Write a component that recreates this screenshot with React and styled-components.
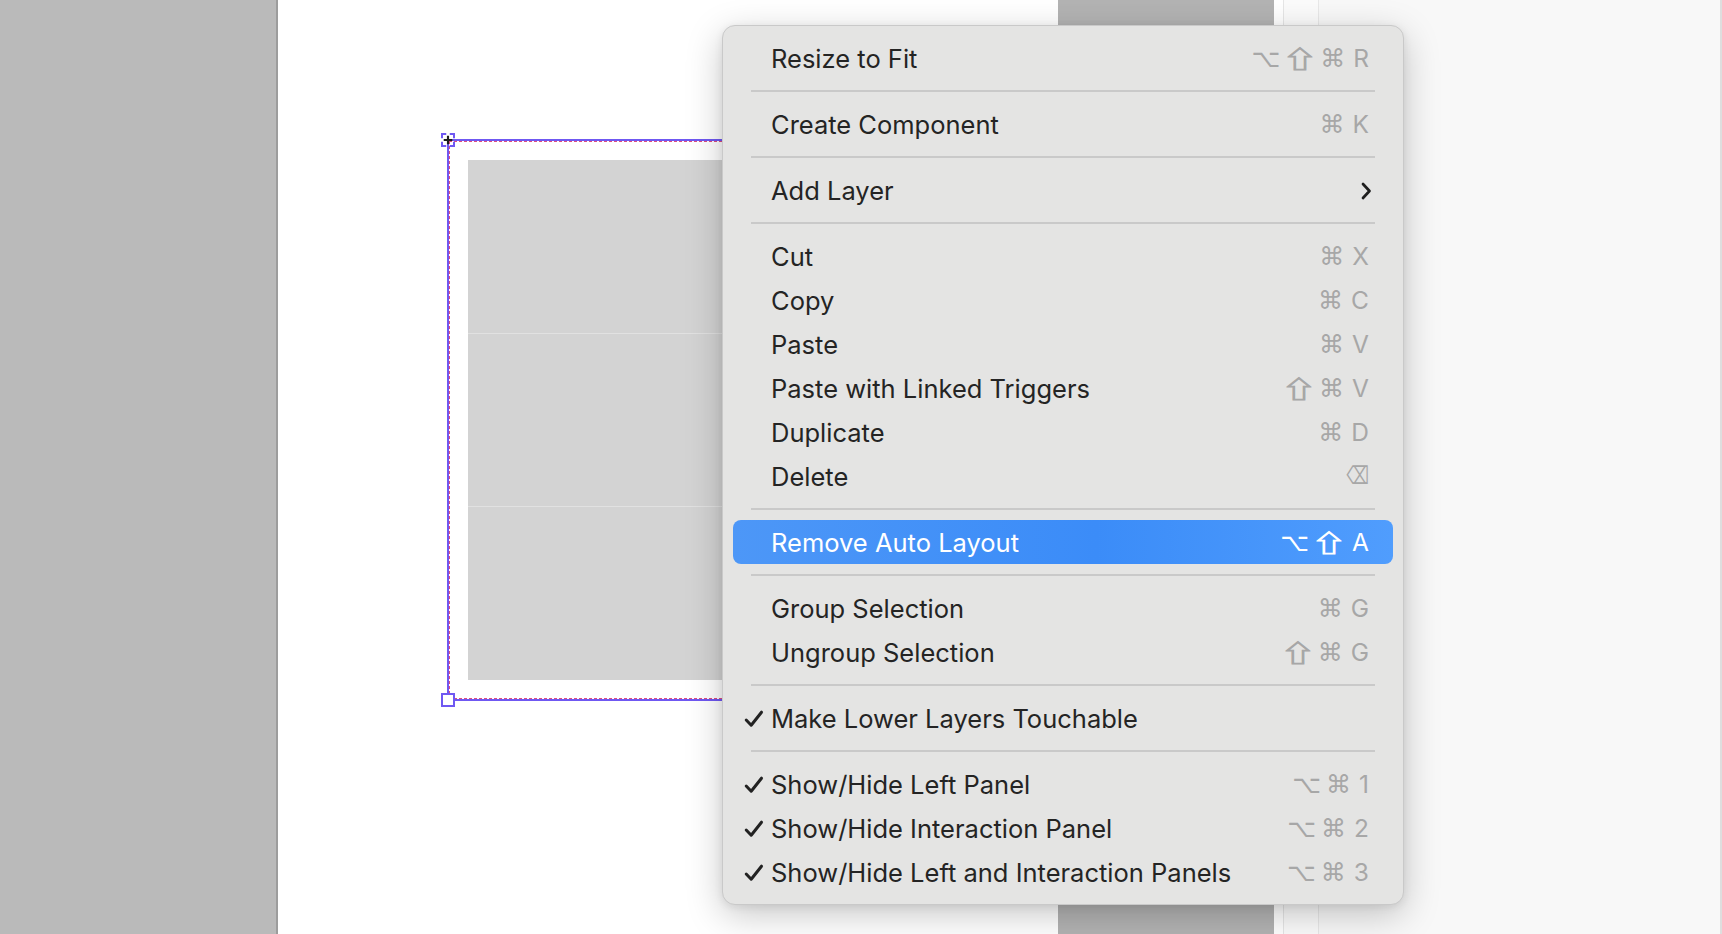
import React from "react";
import styled, { createGlobalStyle } from "styled-components";

const GlobalStyle = createGlobalStyle`
  html, body {
    margin: 0;
    padding: 0;
    overflow: hidden;
    background: #ffffff;
  }
  body {
    font-family: Inter, "Noto Sans", "DejaVu Sans", sans-serif;
  }
`;

const MENU = [
  [{ label: "Resize to Fit", keys: ["⌥", "⇧", "⌘", "R"] }],
  [{ label: "Create Component", keys: ["⌘", "K"] }],
  [{ label: "Add Layer", submenu: true }],
  [
    { label: "Cut", keys: ["⌘", "X"] },
    { label: "Copy", keys: ["⌘", "C"] },
    { label: "Paste", keys: ["⌘", "V"] },
    { label: "Paste with Linked Triggers", keys: ["⇧", "⌘", "V"] },
    { label: "Duplicate", keys: ["⌘", "D"] },
    { label: "Delete", keys: ["⌫"] },
  ],
  [{ label: "Remove Auto Layout", keys: ["⌥", "⇧", "A"], active: true }],
  [
    { label: "Group Selection", keys: ["⌘", "G"] },
    { label: "Ungroup Selection", keys: ["⇧", "⌘", "G"] },
  ],
  [{ label: "Make Lower Layers Touchable", checked: true }],
  [
    { label: "Show/Hide Left Panel", keys: ["⌥", "⌘", "1"], checked: true },
    { label: "Show/Hide Interaction Panel", keys: ["⌥", "⌘", "2"], checked: true },
    { label: "Show/Hide Left and Interaction Panels", keys: ["⌥", "⌘", "3"], checked: true },
  ],
];

// which font and size each modifier glyph needs to look like the macOS one
const SYMBOL_KIND = {
  "⌘": "cmd",
  "⌥": "opt",
  "⇧": "shift",
  "⌫": "del",
};

const CheckIcon = () => (
  <svg width="20" height="18" viewBox="0 0 20 18" fill="none">
    <path d="M2.2 10 L7.2 15.2 L17.5 2.2" stroke="currentColor" strokeWidth="3" strokeLinecap="round" strokeLinejoin="round" />
  </svg>
);

const ChevronIcon = () => (
  <svg width="12" height="20" viewBox="0 0 12 20" fill="none">
    <path d="M3 3 L9.5 10 L3 17" stroke="currentColor" strokeWidth="2.7" strokeLinecap="round" strokeLinejoin="round" />
  </svg>
);

const Crosshair = () => (
  <svg width="14" height="14" viewBox="0 0 14 14">
    <path d="M7 1 V13 M1 7 H13" stroke="#1c1c1c" strokeWidth="3" />
  </svg>
);

const Shortcut = ({ keys }) => (
  <Keys>
    {keys.map((k, i) => (
      <Key key={i} $kind={SYMBOL_KIND[k] || "letter"}>
        {k}
      </Key>
    ))}
  </Keys>
);

const MenuItem = ({ item }) => (
  <Item $active={item.active}>
    <CheckSlot>{item.checked && <CheckIcon />}</CheckSlot>
    <Label>{item.label}</Label>
    {item.keys && <Shortcut keys={item.keys} />}
    {item.submenu && (
      <Arrow>
        <ChevronIcon />
      </Arrow>
    )}
  </Item>
);

const App = () => {
  return (
    <>
      <GlobalStyle />
      <Page>
        <LeftPanel />
        <Canvas>
          <OtherFrame />
          <Frame>
            <Handle $corner="top">
              <Crosshair />
            </Handle>
            <Handle $corner="bottom" />
            <Fill>
              <Cell />
              <Cell />
              <Cell />
            </Fill>
          </Frame>
        </Canvas>
        <Gutter />
        <RightPanel />

        <Menu>
          {MENU.map((group, gi) => (
            <React.Fragment key={gi}>
              {gi > 0 && <Separator />}
              {group.map((item) => (
                <MenuItem key={item.label} item={item} />
              ))}
            </React.Fragment>
          ))}
        </Menu>
      </Page>
    </>
  );
};

const Page = styled.div`
  position: relative;
  display: flex;
  width: 1722px;
  height: 934px;
  overflow: hidden;
`;

const LeftPanel = styled.div`
  flex: 0 0 276px;
  background: #bababa;
  border-right: 2px solid #9d9d9d;
`;

const Canvas = styled.div`
  position: relative;
  flex: 0 0 1005px;
  background: #ffffff;
  overflow: hidden;
`;

const OtherFrame = styled.div`
  position: absolute;
  left: 780px;
  top: 0;
  width: 216px;
  height: 100%;
  background: #b3b3b3;
`;

const Frame = styled.div`
  position: absolute;
  left: 169px;
  top: 139px;
  width: 600px;
  height: 562px;
  box-sizing: border-box;
  padding: 19px;
  background: #ffffff;
  border: 2px solid #6f58f2;
  border-right: none;

  &::after {
    content: "";
    position: absolute;
    inset: 0 0 0 0;
    border: 1.5px dashed #dd4d82;
    border-right: none;
    pointer-events: none;
  }
`;

const Handle = styled.div`
  position: absolute;
  left: -8px;
  width: 10px;
  height: 10px;
  display: flex;
  align-items: center;
  justify-content: center;
  z-index: 2;
  top: ${(p) => (p.$corner === "top" ? "-8px" : "auto")};
  bottom: ${(p) => (p.$corner === "bottom" ? "-8px" : "auto")};
  background: ${(p) => (p.$corner === "top" ? "transparent" : "#ffffff")};
  border: 2px ${(p) => (p.$corner === "top" ? "dashed" : "solid")} #6f58f2;
`;

const Fill = styled.div`
  display: flex;
  flex-direction: column;
  height: 100%;
  background: #d3d3d3;
`;

const Cell = styled.div`
  flex: 1;
  & + & {
    border-top: 1px solid #e1e1e1;
  }
`;

const Gutter = styled.div`
  flex: 0 0 34px;
  background: #fbfbfb;
  border-left: 1px solid #e6e6e6;
`;

const RightPanel = styled.div`
  flex: 1;
  background: #f8f8f8;
  border-left: 1px solid #e8e8e8;
  border-right: 2px solid #dedede;
`;

const Menu = styled.div`
  position: absolute;
  left: 722px;
  top: 25px;
  width: 682px;
  box-sizing: border-box;
  padding: 10px;
  background: #e4e4e3;
  border: 1px solid #c9c9c9;
  border-radius: 13px;
  box-shadow: 0 10px 36px rgba(0, 0, 0, 0.22), 0 2px 8px rgba(0, 0, 0, 0.08);
`;

const Item = styled.div`
  display: flex;
  align-items: center;
  height: 44px;
  padding: 2px 24px 0 11px;
  box-sizing: border-box;
  border-radius: 8px;
  color: ${(p) => (p.$active ? "#ffffff" : "#242424")};
  background: ${(p) =>
    p.$active ? "linear-gradient(90deg, #4d97f7 0%, #3b8cf8 55%, #509dfd 100%)" : "transparent"};
  --key-color: ${(p) => (p.$active ? "#ffffff" : "#a7a7a7")};
`;

const CheckSlot = styled.div`
  flex: 0 0 27px;
  display: flex;
  align-items: center;
  color: #222222;
`;

const Label = styled.span`
  flex: 1;
  font-family: Inter, "Noto Sans", sans-serif;
  font-size: 25.5px;
  line-height: 1;
  white-space: nowrap;
`;

const Keys = styled.div`
  display: flex;
  align-items: center;
  gap: 5px;
  margin-top: -2px;
  color: var(--key-color);
`;

const KEY_FONTS = {
  letter: 'font-family: Inter, "Noto Sans", sans-serif; font-size: 24.5px; margin-left: 3px;',
  cmd: 'font-family: "DejaVu Sans", sans-serif; font-size: 25px;',
  opt: 'font-family: "DejaVu Sans", sans-serif; font-size: 25px;',
  shift:
    'font-family: "Noto Sans CJK JP", "DejaVu Sans", sans-serif; font-size: 24px; transform: scaleX(1.45); margin: 0 3px; -webkit-text-stroke: 0.9px currentColor;',
  del: 'font-family: "DejaVu Sans", sans-serif; font-size: 24px; transform: scale(0.66, 1.02); transform-origin: right center; margin-left: -11px;',
};

const Key = styled.span`
  display: inline-block;
  line-height: 1;
  ${(p) => KEY_FONTS[p.$kind]}
`;

const Arrow = styled.div`
  display: flex;
  align-items: center;
  margin-right: -3px;
  color: #1e1e1e;
`;

const Separator = styled.div`
  height: 2px;
  margin: 10px 18px;
  background: #c9c9c9;
`;

export default App;
